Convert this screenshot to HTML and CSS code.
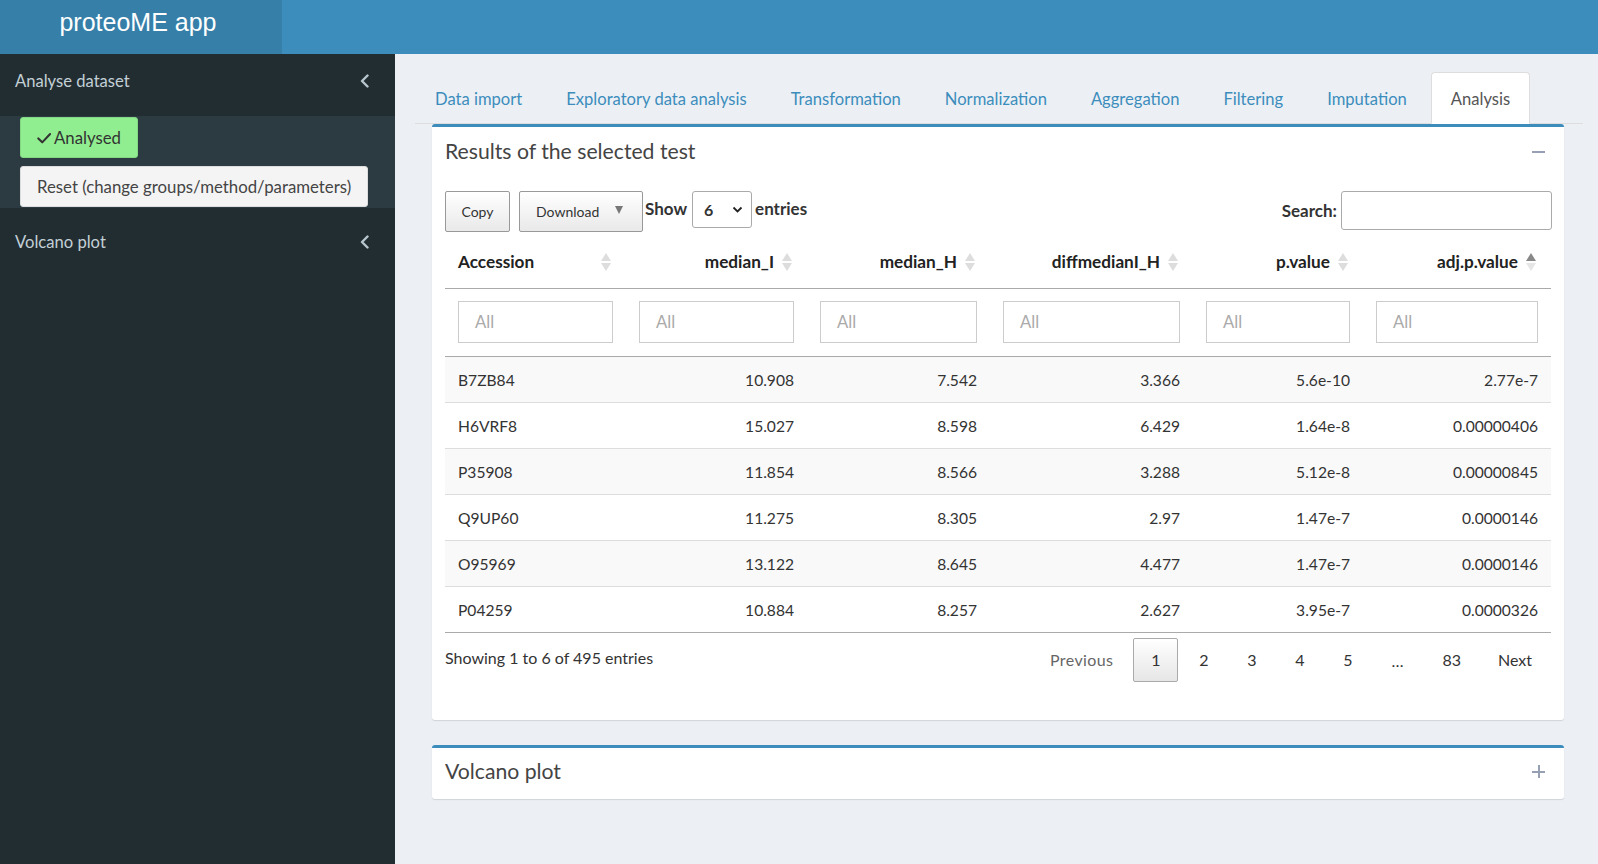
FILE: index.html
```html
<!DOCTYPE html>
<html lang="en">
<head>
<meta charset="utf-8">
<title>proteoME app</title>
<link rel="stylesheet" href="styles.css">
</head>
<body>
<header class="topbar">
  <div class="logo">proteoME app</div>
  <div class="navbar"></div>
</header>
<div class="layout">
  <aside class="sidebar">
    <div class="menu-item open">
      <span>Analyse dataset</span>
      <svg class="chev" width="9" height="14" viewBox="0 0 9 14"><polyline points="7.5,1.5 2,7 7.5,12.5" fill="none" stroke="currentColor" stroke-width="2.4" stroke-linecap="round" stroke-linejoin="round"/></svg>
    </div>
    <div class="submenu">
      <button class="btn btn-ok"><svg class="check" width="16" height="16" viewBox="0 0 16 16"><polyline points="1.5,8.5 6,13 15,3.5" fill="none" stroke="currentColor" stroke-width="2.4" stroke-linecap="round" stroke-linejoin="round"/></svg>Analysed</button>
      <button class="btn btn-reset">Reset (change groups/method/parameters)</button>
    </div>
    <div class="menu-item second">
      <span>Volcano plot</span>
      <svg class="chev" width="9" height="14" viewBox="0 0 9 14"><polyline points="7.5,1.5 2,7 7.5,12.5" fill="none" stroke="currentColor" stroke-width="2.4" stroke-linecap="round" stroke-linejoin="round"/></svg>
    </div>
  </aside>
  <main class="content">
    <ul class="tabs">
      <li><a>Data import</a></li>
      <li><a>Exploratory data analysis</a></li>
      <li><a>Transformation</a></li>
      <li><a>Normalization</a></li>
      <li><a>Aggregation</a></li>
      <li><a>Filtering</a></li>
      <li><a>Imputation</a></li>
      <li class="active"><a>Analysis</a></li>
    </ul>
    <div class="tab-content">
      <section class="box">
        <div class="box-header">
          <h3 class="box-title">Results of the selected test</h3>
          <span class="tool-minus"></span>
        </div>
        <div class="box-body">
          <div class="dt-top">
            <div class="dt-left">
              <button class="dt-btn copy">Copy</button>
              <button class="dt-btn download">Download<span class="caret"></span></button>
              <label class="dt-label">Show</label>
              <div class="select"><span>6</span><svg width="11" height="7" viewBox="0 0 11 7"><polyline points="1.5,1.5 5.5,5.5 9.5,1.5" fill="none" stroke="#222" stroke-width="1.8"/></svg></div>
              <label class="dt-label">entries</label>
            </div>
            <div class="dt-right">
              <label class="dt-label">Search:</label>
              <div class="search"></div>
            </div>
          </div>
          <table class="dt">
            <colgroup>
              <col class="w1"><col class="w2"><col class="w3"><col class="w4"><col class="w5"><col class="w6">
            </colgroup>
            <thead>
              <tr class="head">
                <th class="left"><div class="th"><span>Accession</span><i class="sort"><b class="up"></b><b class="dn"></b></i></div></th>
                <th><div class="th"><span>median_I</span><i class="sort"><b class="up"></b><b class="dn"></b></i></div></th>
                <th><div class="th"><span>median_H</span><i class="sort"><b class="up"></b><b class="dn"></b></i></div></th>
                <th><div class="th"><span>diffmedianI_H</span><i class="sort"><b class="up"></b><b class="dn"></b></i></div></th>
                <th><div class="th"><span>p.value</span><i class="sort"><b class="up"></b><b class="dn"></b></i></div></th>
                <th><div class="th"><span>adj.p.value</span><i class="sort asc"><b class="up"></b><b class="dn"></b></i></div></th>
              </tr>
              <tr class="filters">
                <td><div class="finput">All</div></td>
                <td><div class="finput">All</div></td>
                <td><div class="finput">All</div></td>
                <td><div class="finput">All</div></td>
                <td><div class="finput">All</div></td>
                <td><div class="finput">All</div></td>
              </tr>
            </thead>
            <tbody>
              <tr><td class="left">B7ZB84</td><td>10.908</td><td>7.542</td><td>3.366</td><td>5.6e-10</td><td>2.77e-7</td></tr>
              <tr><td class="left">H6VRF8</td><td>15.027</td><td>8.598</td><td>6.429</td><td>1.64e-8</td><td>0.00000406</td></tr>
              <tr><td class="left">P35908</td><td>11.854</td><td>8.566</td><td>3.288</td><td>5.12e-8</td><td>0.00000845</td></tr>
              <tr><td class="left">Q9UP60</td><td>11.275</td><td>8.305</td><td>2.97</td><td>1.47e-7</td><td>0.0000146</td></tr>
              <tr><td class="left">O95969</td><td>13.122</td><td>8.645</td><td>4.477</td><td>1.47e-7</td><td>0.0000146</td></tr>
              <tr><td class="left">P04259</td><td>10.884</td><td>8.257</td><td>2.627</td><td>3.95e-7</td><td>0.0000326</td></tr>
            </tbody>
          </table>
          <div class="dt-bottom">
            <div class="info">Showing 1 to 6 of 495 entries</div>
            <div class="paginate">
              <span class="pg disabled">Previous</span>
              <span class="pg current">1</span>
              <span class="pg">2</span>
              <span class="pg">3</span>
              <span class="pg">4</span>
              <span class="pg">5</span>
              <span class="ellipsis">…</span>
              <span class="pg">83</span>
              <span class="pg">Next</span>
            </div>
          </div>
        </div>
      </section>
      <section class="box collapsed">
        <div class="box-header tall">
          <h3 class="box-title">Volcano plot</h3>
          <span class="tool-plus"></span>
        </div>
      </section>
    </div>
  </main>
</div>
</body>
</html>
```
FILE: styles.css
```css
* { box-sizing: border-box; }
html, body { margin: 0; padding: 0; }
body {
  font-family: Lato, "Open Sans", sans-serif;
  color: #333;
  background: #ecf0f5;
  height: 864px;
  overflow: hidden;
}
button { font-family: inherit; }

/* top bar */
.topbar { display: flex; height: 54px; background: #3c8dbc; }
.logo {
  width: 282px;
  background: #367fa9;
  color: #fff;
  font-family: "Liberation Sans", Arial, sans-serif;
  font-size: 25px;
  line-height: 44px;
  text-align: center;
  padding-right: 6px;
}
.navbar { flex: 1; }

.layout { display: flex; height: 810px; }

/* sidebar */
.sidebar { width: 395px; background: #222d32; color: #c3d0d6; flex: none; }
.menu-item {
  display: flex;
  justify-content: space-between;
  align-items: center;
  font-size: 16.6px;
  line-height: 20px;
  padding: 17px 26px 25px 15px;
}
.menu-item.second { padding-top: 24px; }
.chev { color: #b8c7ce; }
.submenu {
  background: #2c3b41;
  padding: 1px 0 1px 20px;
  display: flex;
  flex-direction: column;
  align-items: flex-start;
  gap: 8px;
}
.btn {
  height: 41px;
  border-radius: 3px;
  font-size: 16.8px;
  display: flex;
  align-items: center;
  padding: 0 16px;
  border: 1px solid #ddd;
  white-space: nowrap;
}
.btn-ok { width: 118px; background: #90ee90; border-color: #84d884; color: #333; }
.check { margin-right: 3px; color: #333; }
.btn-reset { width: 348px; background: #f4f4f4; color: #444; padding: 0 0 0 16px; }

/* content */
.content { flex: 1; padding: 18px 15px 0 20px; }
.tabs {
  list-style: none;
  margin: 0;
  padding: 0;
  display: flex;
  border-bottom: 1px solid #ddd;
  height: 52px;
}
.tabs li { margin-right: 4px; }
.tabs a {
  display: block;
  padding: 14px 19px 13px;
  font-size: 16.58px;
  line-height: 24px;
  color: #3c8dbc;
  border: 1px solid transparent;
  border-radius: 4px 4px 0 0;
}
.tabs li.active a {
  background: #fff;
  color: #555;
  border-color: #ddd;
  border-bottom-color: #fff;
  height: 52px;
}
.tab-content { padding: 0 19px 0 17px; }

.box {
  background: #fff;
  border-top: 3px solid #3c8dbc;
  border-radius: 3px;
  box-shadow: 0 1px 1px rgba(0,0,0,0.12);
}
.box.collapsed { margin-top: 25px; }
.box-header {
  display: flex;
  justify-content: space-between;
  align-items: center;
  padding: 12px 19px 10px 13px;
}
.box-header.tall { padding: 11px 19px 15px 13px; }
.box-title {
  margin: 0;
  font-weight: 400;
  font-size: 21.2px;
  line-height: 25px;
  color: #444;
}
.tool-minus { width: 13px; height: 2px; background: #97a0b3; }
.tool-plus { width: 13px; height: 13px; position: relative; }
.tool-plus::before, .tool-plus::after {
  content: "";
  position: absolute;
  background: #97a0b3;
}
.tool-plus::before { left: 0; right: 0; top: 5.5px; height: 2px; }
.tool-plus::after { top: 0; bottom: 0; left: 5.5px; width: 2px; }

.box-body { padding: 17px 12px 38px 13px; }

.dt-top { display: flex; justify-content: space-between; align-items: flex-start; height: 41px; }
.dt-left, .dt-right { display: flex; align-items: center; }
.dt-left { height: 41px; }
.dt-btn {
  height: 41px;
  border: 1px solid #999;
  border-radius: 2px;
  background: linear-gradient(to bottom, #ffffff 0%, #e9e9e9 100%);
  color: #333;
  font-size: 14px;
  padding: 0 15px;
  margin-right: 9px;
}
.dt-btn.copy { width: 65px; }
.dt-btn.download {
  width: 124px;
  margin-right: 2px;
  display: flex;
  align-items: center;
  padding-left: 16px;
}
.caret {
  width: 0; height: 0;
  border-left: 4.5px solid transparent;
  border-right: 4.5px solid transparent;
  border-top: 8px solid #777;
  margin-left: 16px;
  margin-top: -3px;
}
.dt-label { font-weight: 700; font-size: 17px; color: #333; }
.dt-left .dt-label { position: relative; top: -3px; }
.select {
  width: 60px;
  height: 37px;
  border: 1px solid #aaa;
  border-radius: 3px;
  margin: 0 3px 0 5px;
  display: flex;
  align-items: center;
  justify-content: space-between;
  padding: 0 8px 0 11px;
  font-weight: 700;
  font-size: 16px;
  align-self: flex-start;
}
.dt-right .dt-label { margin-right: 4px; }
.search { width: 211px; height: 39px; border: 1px solid #aaa; border-radius: 3px; }

/* table */
.dt { width: 1106px; border-collapse: collapse; table-layout: fixed; margin-top: 8px; }
.w1 { width: 181px; } .w2 { width: 181px; } .w3 { width: 183px; }
.w4 { width: 203px; } .w5 { width: 170px; } .w6 { width: 188px; }
.head th {
  padding: 10px 15px 14px 13px;
  font-weight: 700;
  font-size: 17.2px;
  line-height: 24px;
  border-bottom: 1px solid #aaa;
  color: #222;
}
.th { display: flex; justify-content: flex-end; align-items: center; gap: 8px; }
th.left .th { justify-content: space-between; }
.sort { display: flex; flex-direction: column; gap: 2px; width: 10px; }
.sort b { display: block; width: 0; height: 0; border-left: 5px solid transparent; border-right: 5px solid transparent; }
.sort .up { border-bottom: 8px solid #ddd; }
.sort .dn { border-top: 8px solid #ddd; }
.sort.asc .up { border-bottom-color: #888; }
.sort.asc .dn { border-top-color: #e6e6e6; }
.filters td { padding: 12px 13px 13px; border-bottom: 1px solid #aaa; }
.finput {
  height: 42px;
  border: 1px solid #ccc;
  color: #aaa;
  font-size: 16.7px;
  line-height: 40px;
  padding-left: 16px;
}
tbody td {
  padding: 11px 13px 10px;
  font-size: 15.6px;
  line-height: 24px;
  text-align: right;
  border-bottom: 1px solid #ddd;
  color: #333;
}
tbody td.left { text-align: left; }
tbody tr:nth-child(odd) td { background: #f9f9f9; }
tbody tr:last-child td { border-bottom-color: #aaa; }

.dt-bottom { display: flex; justify-content: space-between; align-items: center; margin-top: 5px; }
.info { font-size: 16px; color: #333; margin-top: -5px; }
.paginate { display: flex; align-items: center; font-size: 16px; margin-right: 3px; }
.pg {
  height: 44px;
  line-height: 42px;
  padding: 0 16px;
  min-width: 45px;
  text-align: center;
  border: 1px solid transparent;
  border-radius: 2px;
  color: #333;
  margin-left: 3px;
}
.pg.disabled { color: #666; letter-spacing: 0.4px; }
.pg.current { border-color: #aaa; background: linear-gradient(to bottom, #ffffff 0%, #e6e6e6 100%); }
.ellipsis { padding: 0 18px; margin-left: 3px; color: #333; letter-spacing: 1px; }
```
